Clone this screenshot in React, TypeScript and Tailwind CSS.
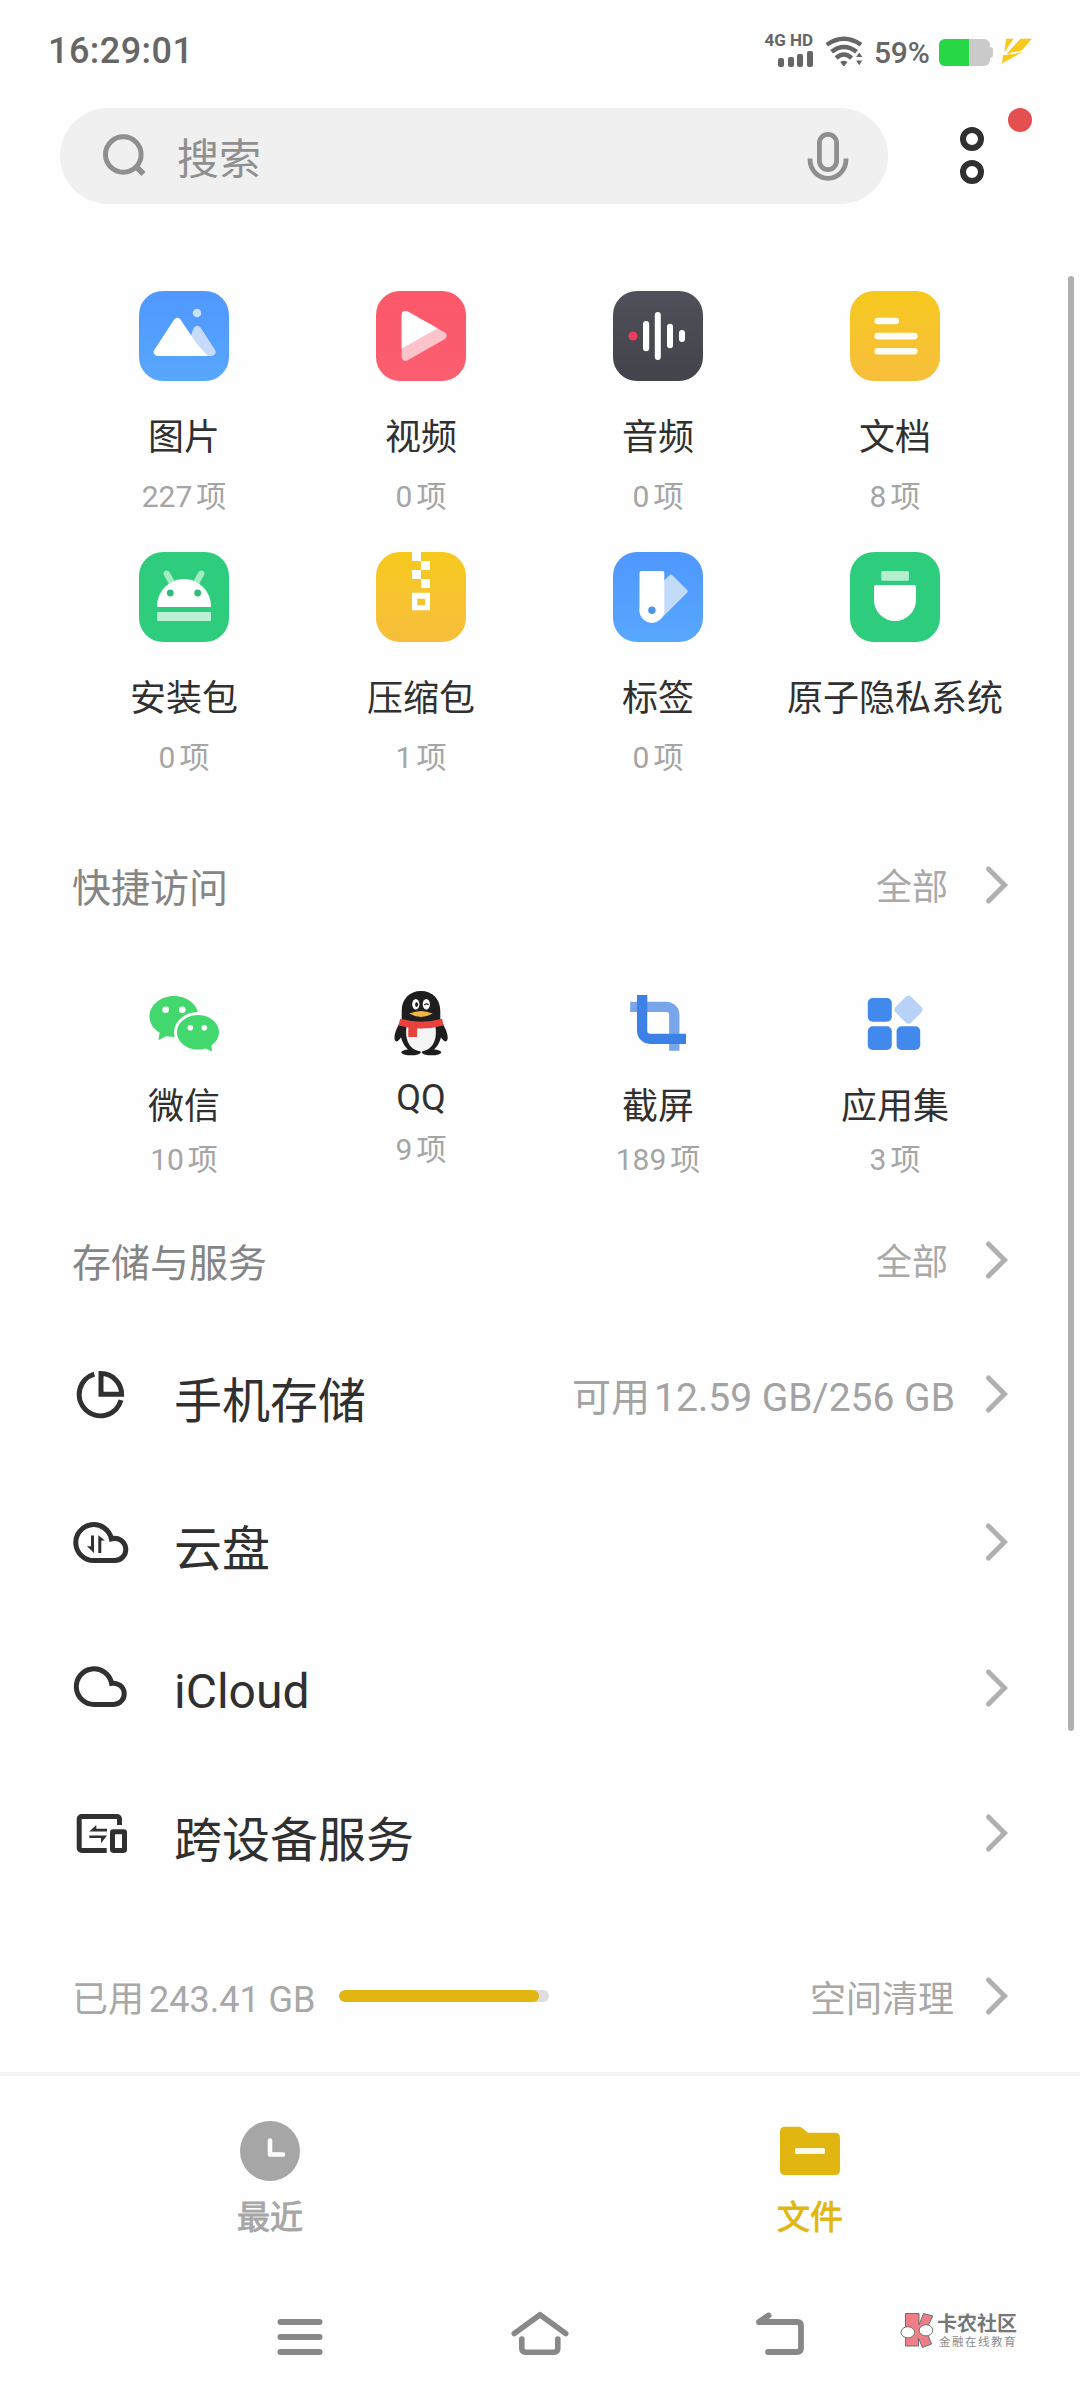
import type { ReactNode } from "react";

function Chevron() {
  return (
    <svg width="28" height="44" viewBox="0 0 28 44" fill="none" className="shrink-0">
      <path d="M6.5 6 22.5 22 6.5 38" stroke="#b0b0b0" strokeWidth="5" strokeLinecap="round" strokeLinejoin="miter" />
    </svg>
  );
}

function StatusBar() {
  return (
    <div className="flex h-[102px] items-center justify-between pl-12 pr-[46px] text-[#666666]">
      <span className="font-[Roboto] text-[36px] font-medium leading-none tracking-[0.45px]">16:29:01</span>
      <div className="flex items-center">
        <div className="-mt-[3px] flex w-[48px] flex-col items-end">
          <span className="h-[17px] whitespace-nowrap font-[Roboto] text-[17px] font-bold leading-[17px]">4G HD</span>
          <div className="mt-0.5 flex h-4 items-end gap-[3.6px]">
            <span className="h-[9px] w-1.5 rounded-[2px] bg-[#666666]" />
            <span className="h-[10.5px] w-1.5 rounded-[2px] bg-[#666666]" />
            <span className="h-[13px] w-1.5 rounded-[2px] bg-[#666666]" />
            <span className="h-4 w-1.5 rounded-[2px] bg-[#666666]" />
          </div>
        </div>
        <svg width="40" height="34" viewBox="0 0 40 34" fill="none" className="ml-[11px]">
          <g stroke="#666666" strokeWidth="4.4">
            <path d="M2.8 10.8Q19.9-1.2 37 10.8" />
            <path d="M7.6 17.8Q19.9 8 32.6 17.8" />
            <path d="M12.2 24Q19.9 17 27.6 24" />
          </g>
          <path d="M16.2 28Q19.8 25.4 23.5 28L20.8 31.6Q19.8 32.6 18.8 31.6Z" fill="#666666" />
          <path d="M35.2 18.5 38.3 23H32.1ZM35.2 31.2 32.1 26.4H38.3Z" fill="#666666" />
        </svg>
        <span className="ml-[10px] mt-1 w-[56px] whitespace-nowrap font-[Roboto] text-[30px] font-medium leading-none tracking-[-0.2px]">59%</span>
        <div className="ml-[9px] mt-[3px] flex items-center">
          <div className="h-[27px] w-[51px] overflow-hidden rounded-[6px] bg-[#cacaca]">
            <div className="h-full w-[30px] bg-[#27d745]" />
          </div>
          <div className="h-[11px] w-[3px] rounded-r-[3px] bg-[#cacaca]" />
        </div>
        <svg width="34" height="30" viewBox="0 0 34 30" className="ml-[7px]" fill="#f8c81c">
          <path d="M6 2.8H13.6L4.4 16.2Z" />
          <path d="M20.4 2.8H32L21.8 14.6 11.6 16.6 6.6 18.4 10.4 13.6Z" />
          <path d="M3 19.2 8.4 18.8 9.4 17.8 11.6 18.6 22.8 15.8 2 27.6Z" />
        </svg>
      </div>
    </div>
  );
}

function SearchRow() {
  return (
    <div className="mt-1.5 flex h-24 items-center pl-[60px]">
      <div className="flex h-24 w-[828px] items-center rounded-full bg-[#f0f0f0] pl-[40px] pr-[36px]">
        <svg width="50" height="50" viewBox="0 0 50 50" fill="none" stroke="#8f8f8f" strokeWidth="5">
          <circle cx="23.3" cy="23.5" r="17.8" />
          <path d="M36 35.5 43.5 43" strokeWidth="6" />
        </svg>
        <span className="ml-[27px] flex-1 text-[42px] leading-[60px] text-[#8f8f8f]">搜索</span>
        <svg width="48" height="54" viewBox="0 0 48 54" fill="none" stroke="#8f8f8f" strokeWidth="4.8">
          <rect x="15.4" y="5.4" width="17.2" height="35.2" rx="8.6" />
          <path d="M6 29.5V30.5a18 18.8 0 0 0 36 0V29.5" />
        </svg>
      </div>
      <div className="relative -mt-px ml-[72px] flex w-[72px] flex-col gap-[9px]">
        <span className="size-6 rounded-full border-[6px] border-[#303030]" />
        <span className="size-6 rounded-full border-[6px] border-[#303030]" />
        <span className="absolute left-12 top-[-19px] size-6 rounded-full bg-[#e54f4f]" />
      </div>
    </div>
  );
}

function Count({ n }: { n: string }) {
  return (
    <div className="flex h-9 items-baseline justify-center gap-1 text-[30px] leading-9 text-[#a5a5a5]">
      <span className="font-[Roboto]">{n}</span>
      <span>项</span>
    </div>
  );
}

function PictureIcon() {
  return (
    <g strokeWidth="8" strokeLinejoin="round">
      <circle cx="58" cy="22" r="4.3" fill="#c9dfff" />
      <path d="M58.3 39 72.6 61H50Z" fill="#c6dbfb" stroke="#c6dbfb" />
      <path d="M38.3 31 18.8 61H58.5Z" fill="#fff" stroke="#fff" />
      <path d="M55 50 69 65H55Z" fill="#fff" />
    </g>
  );
}

function VideoIcon() {
  return (
    <g strokeWidth="8" strokeLinejoin="round">
      <clipPath id="play-light">
        <path d="M0 0H90V21.4L0 71.7Z" />
      </clipPath>
      <path d="M29.7 24 66.5 44.7 29.7 65.8Z" fill="#fdc3ca" stroke="#fdc3ca" />
      <path d="M29.7 24 66.5 44.7 29.7 65.8Z" fill="#fff" stroke="#fff" clipPath="url(#play-light)" />
    </g>
  );
}

function AudioIcon() {
  return (
    <g fill="#fff">
      <circle cx="20" cy="45" r="4.5" fill="#f03b5f" />
      <rect x="30" y="30" width="6.2" height="30.3" rx="3" />
      <rect x="41.8" y="21" width="6" height="48" rx="3" />
      <rect x="54" y="32.7" width="6" height="24.6" rx="3" />
      <rect x="66" y="39" width="6" height="12" rx="3" />
    </g>
  );
}

function DocIcon() {
  return (
    <g fill="#fffdf3">
      <rect x="24.5" y="26.7" width="24.5" height="6.6" rx="3" />
      <rect x="24.5" y="41.8" width="43" height="6.6" rx="3" />
      <rect x="24.5" y="57" width="43" height="6.6" rx="3" />
    </g>
  );
}

function PackageIcon() {
  return (
    <g>
      <path d="M27.8 21.8 33 31M62.2 21.8 57 31" stroke="#a2ecc3" strokeWidth="6.4" strokeLinecap="round" />
      <path d="M18 55V54a27 27 0 0 1 54 0V55Z" fill="#fff" />
      <circle cx="31.3" cy="41" r="3.4" fill="#32bd77" />
      <circle cx="58.7" cy="41" r="3.4" fill="#32bd77" />
      <rect x="18" y="60" width="54" height="9" rx="1" fill="#bdf1d6" />
    </g>
  );
}

function ZipIcon() {
  return (
    <g fill="#fff">
      <rect x="36" y="0" width="9" height="9" />
      <rect x="45" y="9" width="9" height="9" />
      <rect x="36" y="18" width="9" height="9" />
      <rect x="45" y="27" width="9" height="9" />
      <path d="M36 40.7H54V58.3H36ZM41.2 46.7V53.3H49V46.7Z" fillRule="evenodd" />
    </g>
  );
}

function TagIcon() {
  return (
    <g>
      <path d="M28.5 19H49.3a2 2 0 0 1 2 2V58.3a12.4 12.4 0 0 1-24.8 0V21a2 2 0 0 1 2-2Z" fill="#c3dbfb" transform="rotate(45 38.9 58.3)" />
      <path d="M28.5 19H49.3a2 2 0 0 1 2 2V58.3a12.4 12.4 0 0 1-24.8 0V21a2 2 0 0 1 2-2Z" fill="#fff" />
      <circle cx="38.9" cy="58.3" r="3.7" fill="#4f93e8" />
    </g>
  );
}

function PrivacyIcon() {
  return (
    <g>
      <rect x="31.3" y="19" width="27.6" height="9.7" rx="1.5" fill="#b5efd0" />
      <path d="M26 33H64a2 2 0 0 1 2 2V48a21 21 0 0 1-42 0V35a2 2 0 0 1 2-2Z" fill="#fff" />
    </g>
  );
}

type Category = { label: string; count?: string; tile: string; icon: ReactNode };

const categories: Category[] = [
  { label: "图片", count: "227", tile: "bg-linear-to-b from-[#4f97ff] to-[#58a7fd]", icon: <PictureIcon /> },
  { label: "视频", count: "0", tile: "bg-linear-to-b from-[#fc5869] to-[#fb5e70]", icon: <VideoIcon /> },
  { label: "音频", count: "0", tile: "bg-linear-to-b from-[#4f5059] to-[#42434b]", icon: <AudioIcon /> },
  { label: "文档", count: "8", tile: "bg-linear-to-b from-[#f6c91c] to-[#f7be3b]", icon: <DocIcon /> },
  { label: "安装包", count: "0", tile: "bg-[#2dcd7d]", icon: <PackageIcon /> },
  { label: "压缩包", count: "1", tile: "bg-linear-to-b from-[#f6c91c] to-[#f7be3b]", icon: <ZipIcon /> },
  { label: "标签", count: "0", tile: "bg-linear-to-b from-[#4f97ff] to-[#58a7fd]", icon: <TagIcon /> },
  { label: "原子隐私系统", tile: "bg-[#2dcd7d]", icon: <PrivacyIcon /> },
];

function CategoryGrid() {
  return (
    <div className="ml-[65.5px] mt-[87px] grid w-[948px] grid-cols-4">
      {categories.map((c) => (
        <div key={c.label} className="flex h-[261px] flex-col items-center">
          <div className={`size-[90px] overflow-hidden rounded-[24px] ${c.tile}`}>
            <svg width="90" height="90" viewBox="0 0 90 90">{c.icon}</svg>
          </div>
          <div className="mb-5 mt-[31px] h-11 whitespace-nowrap text-[36px] leading-[44px] text-[#303030]">{c.label}</div>
          {c.count && <Count n={c.count} />}
        </div>
      ))}
    </div>
  );
}

function WeChatIcon() {
  return (
    <g fill="#43d86d">
      <path d="M26 9C39.5 9 50.5 18.2 50.5 29.5S39.5 50 26 50C23.4 50 21 49.7 18.6 49L10.4 53.2 11.6 45.8C5.4 42 1.5 36.2 1.5 29.5 1.5 18.2 12.5 9 26 9Z" />
      <ellipse cx="50" cy="45.3" rx="24" ry="20.4" fill="#fefefe" />
      <path d="M50 28C61.6 28 71 35.8 71 45.3 71 50.6 68 55.3 63.4 58.4L64 64.4 57.6 61.4C55.2 62.2 52.7 62.6 50 62.6 38.4 62.6 29 54.8 29 45.3S38.4 28 50 28Z" />
      <g fill="#fff">
        <circle cx="17.7" cy="22.7" r="3.3" />
        <circle cx="34.3" cy="22.7" r="3.3" />
        <circle cx="42.3" cy="40.7" r="2.8" />
        <circle cx="56.3" cy="40.7" r="2.8" />
      </g>
    </g>
  );
}

function QQIcon() {
  return (
    <g fill="#1e1e1e">
      <path d="M36 4C47.5 4 55.3 12 55.3 24V32C58.5 38 62.5 44.5 62.7 50 62.8 54.5 60.5 57 56 50.5 54.5 56 52 60 48.5 63H23.5C20 60 17.5 56 16 50.5 11.5 57 9.3 54.5 9.5 50 9.7 44.5 13.5 38 16.7 32V24C16.7 12 24.5 4 36 4Z" />
      <ellipse cx="26" cy="65.3" rx="9.8" ry="3" />
      <ellipse cx="46.5" cy="65.3" rx="9.8" ry="3" />
      <path d="M21.5 40H50.5C52.5 54 46.5 64 36 64S19.5 54 21.5 40Z" fill="#f5f5f5" />
      <path d="M15.2 31.8Q36 37.5 57.2 31.8L58.6 38.6Q46 42 32 41.4V50H23.3V40.6L13.4 38.6Z" fill="#e9423d" />
      <ellipse cx="30.8" cy="17.3" rx="3.6" ry="5.2" fill="#fff" />
      <ellipse cx="41.3" cy="17.3" rx="3.6" ry="5.2" fill="#fff" />
      <ellipse cx="31.6" cy="17.6" rx="1.5" ry="2.4" />
      <path d="M39.3 18.2Q41.2 15.8 43.6 17.8" fill="none" stroke="#1e1e1e" strokeWidth="1.3" />
      <path d="M24.3 26.6Q36 21.5 47.7 26.6 36 33.5 24.3 26.6Z" fill="#f2b544" />
    </g>
  );
}

function CropIcon() {
  return (
    <g fill="none" strokeWidth="10.3">
      <path d="M8.2 19.8H44.3a8 8 0 0 1 8 8V63.7" stroke="#79a5ea" />
      <path d="M20.1 8V43.8a8 8 0 0 0 8 8H64" stroke="#3d81e6" />
    </g>
  );
}

function AppsIcon() {
  return (
    <g fill="#4189ec">
      <rect x="8.8" y="11" width="24" height="23.7" rx="5" />
      <rect x="8.8" y="39.3" width="24" height="23.7" rx="5" />
      <rect x="37.6" y="39.3" width="23.6" height="23.7" rx="5" />
      <rect x="38.5" y="11.7" width="22" height="22" rx="4" fill="#b7d1f7" transform="rotate(45 49.5 22.7)" />
    </g>
  );
}

const quickItems = [
  { label: "微信", count: "10", icon: <WeChatIcon /> },
  { label: "QQ", count: "9", icon: <QQIcon />, latin: true },
  { label: "截屏", count: "189", icon: <CropIcon /> },
  { label: "应用集", count: "3", icon: <AppsIcon /> },
];

function QuickAccess() {
  return (
    <div className="ml-[65.5px] grid h-[243px] w-[948px] grid-cols-4">
      {quickItems.map((q) => (
        <div key={q.label} className="flex flex-col items-center">
          <svg width="72" height="72" viewBox="0 0 72 72">{q.icon}</svg>
          <div
            className={
              q.latin
                ? "mb-3.5 mt-[22px] h-[34px] font-[Roboto] text-[36px] leading-[34px] text-[#303030]"
                : "mb-3.5 mt-[22px] h-11 text-[36px] leading-[44px] text-[#303030]"
            }
          >
            {q.label}
          </div>
          <Count n={q.count} />
        </div>
      ))}
    </div>
  );
}

function SectionHeader({ title }: { title: string }) {
  return (
    <div className="flex h-[60px] items-center pl-[72px] pr-[70px]">
      <h2 className="flex-1 text-[39px] leading-[60px] text-[#858585]">{title}</h2>
      <span className="-mt-0.5 mr-[34px] text-[36px] leading-[56px] text-[#a9a9a9]">全部</span>
      <Chevron />
    </div>
  );
}

function PieIcon() {
  return (
    <>
      <path d="M24.3 10.1A21.3 21.3 0 1 0 51 36.2" />
      <path d="M31 9.6V30.3H51.6A20.7 20.7 0 0 0 31 9.6Z" />
    </>
  );
}

function CloudSyncIcon() {
  return (
    <>
      <path d="M23.8 48.6A18 18 0 1 1 41.4 26.9 11.1 11.1 0 1 1 44.1 48.6Z" />
      <path d="M21 23.6H24V41L17 34.2H21ZM28.3 41V23.2L35 28.6H31.3V41Z" fill="#303030" stroke="none" />
    </>
  );
}

function CloudIcon() {
  return <path d="M24.6 46.4A17.8 17.8 0 1 1 41.6 25.4 10.6 10.6 0 1 1 43.7 46.4Z" />;
}

function DevicesIcon() {
  return (
    <>
      <path d="M36.7 47.4H11.7a2.5 2.5 0 0 1-2.5-2.5V16a2.5 2.500 0 0 1 2.5-2.5H47a2.500 2.500 0 0 1 2.500 2.500V22" />
      <rect x="42.5" y="28.7" width="12" height="18.7" rx="0.8" />
      <path d="M19.3 28.6 26.3 22V25.8H37V28.6ZM19.3 32.4H37L31 40.2V35.1H19.3Z" fill="#303030" stroke="none" />
    </>
  );
}

function StorageRow({ label, icon, height, latin, children }: { label: string; icon: ReactNode; height: string; latin?: boolean; children?: ReactNode }) {
  return (
    <div className={`flex items-center pl-[70px] pr-[70px] ${height}`}>
      <svg width="60" height="60" viewBox="0 0 60 60" fill="none" stroke="#303030" strokeWidth="5">{icon}</svg>
      <span
        className={
          latin
            ? "ml-[44px] mt-2 flex-1 font-[Roboto] text-[48px] leading-[60px] text-[#303030]"
            : "ml-[44px] mt-1.5 flex-1 text-[48px] leading-[60px] text-[#303030]"
        }
      >
        {label}
      </span>
      {children}
      <Chevron />
    </div>
  );
}

function TabBar() {
  return (
    <div className="flex h-[210px] border-t-4 border-[#f3f3f3]">
      <div className="flex flex-1 flex-col items-center pt-[45px] text-[#a6a6a6]">
        <svg width="60" height="60" viewBox="0 0 60 60">
          <circle cx="30" cy="30" r="30" fill="#a6a6a6" />
          <path d="M30 19.5V33.5H43" fill="none" stroke="#fff" strokeWidth="4.6" strokeLinecap="round" strokeLinejoin="round" />
        </svg>
        <span className="mt-3.5 text-[33px] leading-10 [-webkit-text-stroke:0.9px_#a6a6a6]">最近</span>
      </div>
      <div className="flex flex-1 flex-col items-center pt-[45px] text-[#e2b610]">
        <svg width="60" height="60" viewBox="0 0 60 60">
          <path d="M5 5.7H19Q21 5.7 22.5 7.2L28 11.7H55Q60 11.7 60 16.7V49Q60 54 55 54H5Q0 54 0 49V10.7Q0 5.7 5 5.7Z" fill="#e2b610" />
          <rect x="15" y="27" width="30" height="6" rx="1.5" fill="#fffbe8" />
        </svg>
        <span className="mt-3.5 text-[33px] leading-10 [-webkit-text-stroke:0.9px_#e2b610]">文件</span>
      </div>
    </div>
  );
}

function NavBar() {
  return (
    <div className="flex h-[118px] items-start pl-[270px] pt-[25px]">
      <svg width="60" height="60" viewBox="0 0 60 60" fill="none" stroke="#888888" strokeWidth="6" strokeLinecap="round">
        <path d="M10.500 15H49.500M10.500 30H49.500M10.500 45H49.500" />
      </svg>
      <svg width="60" height="60" viewBox="0 0 60 60" className="ml-[180px]" fill="none" stroke="#888888" strokeWidth="5.6" strokeLinecap="round" strokeLinejoin="round">
        <path d="M4.3 26.5 30 7.7 55.7 26.5" />
        <path d="M11.8 32V41.3Q11.8 45.2 15.8 45.2H44Q47.8 45.2 47.8 41.3V32" />
      </svg>
      <svg width="60" height="60" viewBox="0 0 60 60" className="ml-[180px]" fill="none" stroke="#888888" strokeWidth="5.8" strokeLinecap="round" strokeLinejoin="round">
        <path d="M18 45H47Q51 45 51 41V19Q51 15 47 15H9L18.5 8.5" />
      </svg>
      <div className="ml-[88px] flex items-start pt-[3px]">
        <svg width="38" height="40" viewBox="0 0 38 40" fill="#ee7e88" stroke="#6f6f6f" strokeWidth="1">
          <path d="M7.5 3.500H21V15L25.5 3.500 34.8 6 28 20 33.5 34 24.5 37.500 20.5 28V36H7.5Z" />
          <ellipse cx="9.8" cy="22.3" rx="6.8" ry="5.6" fill="#fff" />
          <ellipse cx="28" cy="20.3" rx="6.8" ry="5.6" fill="#fff" />
        </svg>
        <div className="ml-px flex flex-col">
          <span className="mt-[2px] h-[22px] whitespace-nowrap text-[20px] font-bold leading-[22px] text-[#777777]">卡农社区</span>
          <span className="ml-0.5 h-[14px] whitespace-nowrap text-[11.5px] leading-[14px] tracking-[1.5px] text-[#8c8c8c]">金融在线教育</span>
        </div>
      </div>
    </div>
  );
}

export default function App() {
  return (
    <div className="relative h-[2400px] w-[1080px] overflow-hidden bg-[#fefefe] font-['Noto_Sans_CJK_SC',sans-serif]">
      <StatusBar />
      <SearchRow />
      <CategoryGrid />
      <div className="mt-[42px]">
        <SectionHeader title="快捷访问" />
      </div>
      <div className="mt-[72px]">
        <QuickAccess />
      </div>
      <SectionHeader title="存储与服务" />
      <div className="mt-[30px]">
        <StorageRow label="手机存储" icon={<PieIcon />} height="h-[148px]">
          <span className="mr-[27px] mt-1 flex items-baseline gap-1 text-[39px] leading-[58px] text-[#a3a3a3]">
            <span>可用</span>
            <span className="font-[Roboto]">12.59 GB/256 GB</span>
          </span>
        </StorageRow>
        <StorageRow label="云盘" icon={<CloudSyncIcon />} height="h-[148px]" />
        <StorageRow label="iCloud" icon={<CloudIcon />} height="h-[144px]" latin />
        <StorageRow label="跨设备服务" icon={<DevicesIcon />} height="h-[146px]" />
      </div>
      <div className="flex h-[166px] items-center pl-[72px] pr-[70px] pt-3.5 text-[36px] leading-[54px] text-[#a8a8a8]">
        <span className="mt-[3px] flex items-baseline gap-[5px]">
          <span>已用</span>
          <span className="font-[Roboto]">243.41 GB</span>
        </span>
        <div className="ml-[23px] h-3 w-[210px] overflow-hidden rounded-full bg-[#dedee0]">
          <div className="h-full w-[200px] rounded-full bg-[#e2b610]" />
        </div>
        <span className="ml-auto mr-7">空间清理</span>
        <Chevron />
      </div>
      <TabBar />
      <NavBar />
      <div className="absolute right-1.5 top-[276px] h-[1455px] w-1.5 rounded-full bg-[#b0b0b0]" />
    </div>
  );
}
